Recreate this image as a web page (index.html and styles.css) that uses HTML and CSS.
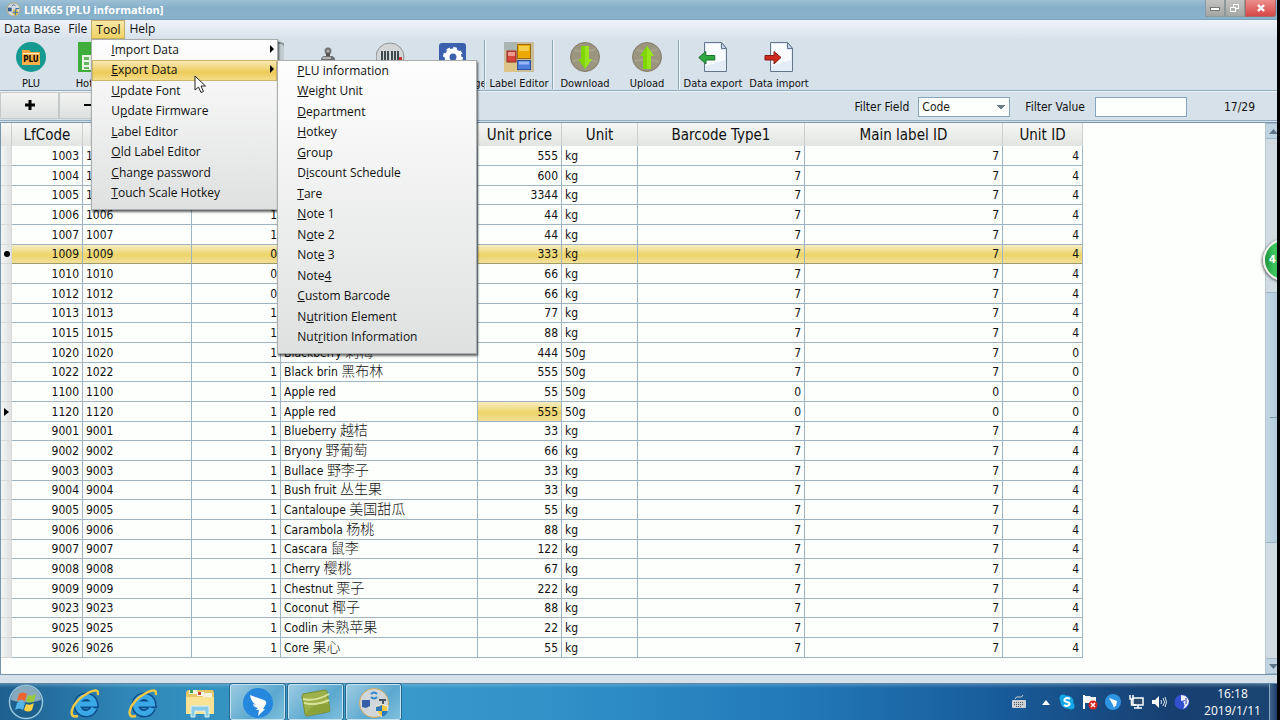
FILE: index.html
```
<!DOCTYPE html>
<html lang="en">
<head>
    <meta charset="UTF-8">
    <meta name="viewport" content="width=device-width, initial-scale=1.0">
    <title>LINK65 [PLU information]</title>
    <link rel="stylesheet" href="styles.css">
</head>
<body>
    <header class="titlebar">
        <svg class="app-icon" viewBox="0 0 16 16">
            <circle cx="8" cy="8" r="7" fill="#d5dbe0" stroke="#b9a57c"/>
            <rect x="2" y="6" width="4" height="4" fill="#33588f"/>
            <path d="M6 4q2-2 4 0M10 7h4M11 7v4" stroke="#3a6da8" fill="none"/>
            <circle cx="10" cy="11" r="3" fill="#e5bd43"/>
            <path d="M10 8v6M7 11h6" stroke="#2f72b8"/>
        </svg>
        <h1 class="title">LINK65 [PLU information]</h1>
        <div class="window-buttons">
            <button class="win-btn" aria-label="Minimize">
                <svg width="12" height="10"><rect x="1.500" y="4.500" width="9" height="3" fill="#fff" stroke="#777"/></svg>
            </button>
            <button class="win-btn" aria-label="Restore">
                <svg width="12" height="10" fill="none" stroke="#fff"><rect x="4.500" y="1.500" width="5" height="4"/><rect x="1.500" y="4.500" width="5" height="4" fill="#aeb0ae"/></svg>
            </button>
            <button class="win-btn close" aria-label="Close">
                <svg width="12" height="10"><path d="M3 2l6 6M9 2L3 8" stroke="#fff" stroke-width="2.400"/></svg>
            </button>
        </div>
    </header>

    <nav class="menubar">
        <button class="menu-btn">Data Base</button>
        <button class="menu-btn">File</button>
        <div class="menu-holder">
            <button class="menu-btn open">Tool</button>
            <ul class="menu">
                <li class="has-sub"><a href="#"><u>I</u>mport Data</a></li>
                <li class="has-sub active"><a href="#"><u>E</u>xport Data</a>
                    <ul class="menu submenu">
                        <li><a href="#"><u>P</u>LU information</a></li>
                        <li><a href="#"><u>W</u>eight Unit</a></li>
                        <li><a href="#"><u>D</u>epartment</a></li>
                        <li><a href="#"><u>H</u>otkey</a></li>
                        <li><a href="#"><u>G</u>roup</a></li>
                        <li><a href="#">D<u>i</u>scount Schedule</a></li>
                        <li><a href="#"><u>T</u>are</a></li>
                        <li><a href="#"><u>N</u>ote 1</a></li>
                        <li><a href="#">N<u>o</u>te 2</a></li>
                        <li><a href="#">Not<u>e</u> 3</a></li>
                        <li><a href="#">Note<u>4</u></a></li>
                        <li><a href="#"><u>C</u>ustom Barcode</a></li>
                        <li><a href="#">N<u>u</u>trition Element</a></li>
                        <li><a href="#">Nut<u>r</u>ition Information</a></li>
                    </ul>
                </li>
                <li><a href="#"><u>U</u>pdate Font</a></li>
                <li><a href="#">U<u>p</u>date Firmware</a></li>
                <li><a href="#"><u>L</u>abel Editor</a></li>
                <li><a href="#"><u>O</u>ld Label Editor</a></li>
                <li><a href="#"><u>C</u>hange password</a></li>
                <li><a href="#"><u>T</u>ouch Scale Hotkey</a></li>
            </ul>
            <svg class="cursor" viewBox="0 0 12 19"><path d="M1 1v14l3.500-3 2.500 5.500 2.500-1-2.500-5.500h4.500z" fill="#fff" stroke="#222"/></svg>
        </div>
        <button class="menu-btn">Help</button>
    </nav>

    <div class="toolbar">
        <button class="tool">
            <svg viewBox="0 0 30 30">
                <circle cx="15" cy="15" r="15" fill="#149a91"/>
                <path d="M6 8h7l2 2h9v13H6z" fill="#f5a53a"/><path d="M7 11h16v2H7z" fill="#fff0cf"/><path d="M6 12h18v11H6z" fill="#f9b04a"/>
                <text x="15" y="20" text-anchor="middle" class="icon-text">PLU</text>
            </svg>
            <span>PLU</span>
        </button>
        <button class="tool">
            <svg viewBox="0 0 30 30">
                <rect width="30" height="30" fill="#3fae3c"/>
                <rect x="4" y="13" width="22" height="15" fill="#e8f5e2"/>
                <path d="M6 15h5v3H6zM6 20h5v3H6zM6 25h5v2H6zM13 15h5v3h-5zM13 20h5v3h-5z" fill="#67b763"/>
            </svg>
            <span>Hotkey</span>
        </button>
        <button class="tool narrow" aria-label="Department"></button>
        <button class="tool narrow" aria-label="Group"></button>
        <button class="tool narrow" aria-label="Note">
            <svg viewBox="0 0 30 30"><rect x="16" y="1" width="15" height="30" rx="5" fill="#c3ccd0" stroke="#879496" stroke-width="2"/></svg>
        </button>
        <button class="tool" aria-label="Tare">
            <svg viewBox="0 0 30 30"><circle cx="14" cy="9" r="2.500" fill="#aaa" stroke="#777" stroke-width="2"/><path d="M12 11h4v3h-4z" fill="#555"/><path d="M7 18q0-4 4-4h6q4 0 4 4v12H7z" fill="#6e7070"/><path d="M9 15h8v2H8z" fill="#b5b7b7"/></svg>
        </button>
        <button class="tool" aria-label="Barcode">
            <svg viewBox="0 0 30 30"><circle cx="14" cy="15" r="14" fill="#d3d7d8" stroke="#8e9496"/><path d="M6 9v14M9 9v14M12 9v14M16 9v14M19 9v14M22 9v14" stroke="#3d4a4e" stroke-width="2"/><rect x="23" y="15" width="3" height="3" fill="#c33"/></svg>
        </button>
        <button class="tool">
            <svg viewBox="0 0 30 30">
                <rect x="1" y="1" width="27" height="27" rx="3" fill="#3c5fae"/>
                <circle cx="15" cy="15" r="6" fill="none" stroke="#fff" stroke-width="5"/>
                <circle cx="15" cy="15" r="8.500" fill="none" stroke="#fff" stroke-width="3" stroke-dasharray="3.500 3.170"/>
            </svg>
            <span>Data manage</span>
        </button>
        <div class="separator"></div>
        <button class="tool wide">
            <svg viewBox="0 0 30 30">
                <rect width="30" height="30" fill="#c8bd98"/><rect width="13" height="8" fill="#aab5b2"/><rect y="19" width="13" height="11" fill="#ddc487"/>
                <rect x="3" y="9" width="9" height="11" fill="#d7443c" stroke="#8d2b27"/><rect x="4" y="10" width="7" height="4" fill="#ee9a8e"/>
                <rect x="13.500" y="2.500" width="13" height="14" fill="#eba900" stroke="#9a6c10"/><rect x="15" y="4" width="10" height="5" fill="#f6cf4a"/>
                <rect x="13.500" y="18.500" width="13" height="9" fill="#4d7ee0" stroke="#30509a"/><rect x="15" y="19.500" width="10" height="3" fill="#96b8f4"/>
            </svg>
            <span>Label Editor</span>
        </button>
        <div class="separator"></div>
        <button class="tool">
            <svg viewBox="0 0 30 30">
                <circle cx="15" cy="15" r="14.500" fill="#9b957f" stroke="#837d6c"/><path d="M4 8q11 3 22-1M3 19q12-4 24 1" stroke="#a8a28d" fill="none" stroke-width="2"/>
                <path d="M11 4h8v13h3l-7 10-7-10h3z" fill="#7ed800"/><path d="M15 4h4v13h3l-7 10z" fill="#98e51c"/>
            </svg>
            <span>Download</span>
        </button>
        <button class="tool">
            <svg viewBox="0 0 30 30">
                <circle cx="15" cy="15" r="14.500" fill="#9b957f" stroke="#837d6c"/><path d="M4 8q11 3 22-1M3 19q12-4 24 1" stroke="#a8a28d" fill="none" stroke-width="2"/>
                <path d="M11 27h8V14h3L15 4 8 14h3z" fill="#7ed800"/><path d="M15 27h4V14h3L15 4z" fill="#98e51c"/>
            </svg>
            <span>Upload</span>
        </button>
        <div class="separator"></div>
        <button class="tool wide">
            <svg viewBox="0 0 30 30">
                <path d="M6.500.500h17l5 6v23h-22z" fill="#e4ecf7" stroke="#65758b"/><path d="M8 2h14v6h5v10L8 24z" fill="#f9fcff"/><path d="M23.500.500v6h5z" fill="#c7d6ea" stroke="#65758b"/>
                <path d="M.800 15.500l7-6v4h9v4.500H8v4z" fill="#2fa842" stroke="#1c702b"/>
            </svg>
            <span>Data export</span>
        </button>
        <button class="tool wide">
            <svg viewBox="0 0 30 30">
                <path d="M6.500.500h17l5 6v23h-22z" fill="#e4ecf7" stroke="#65758b"/><path d="M8 2h14v6h5v10L8 24z" fill="#f9fcff"/><path d="M23.500.500v6h5z" fill="#c7d6ea" stroke="#65758b"/>
                <path d="M17 15.500l-7-6v4H1v4.500h9v4z" fill="#d02a1d" stroke="#831b16"/>
            </svg>
            <span>Data import</span>
        </button>
    </div>

    <div class="filterbar">
        <button class="row-btn" aria-label="Add"><svg width="10" height="10"><path d="M5 0v10M0 5h10" stroke="#000" stroke-width="3"/></svg></button>
        <button class="row-btn" aria-label="Delete"><svg width="10" height="10"><path d="M0 5h10" stroke="#000" stroke-width="2"/></svg></button>
        <div class="filters">
            <label for="filterField">Filter Field</label>
            <select id="filterField">
                <option>Code</option>
                <option>Name</option>
            </select>
            <label for="filterValue">Filter Value</label>
            <input type="text" id="filterValue">
            <span class="count">17/29</span>
        </div>
    </div>

    <main class="grid">
        <div class="grid-body">
            <table>
                <colgroup>
                    <col class="c-mark"><col class="c-lf"><col class="c-code"><col class="c-dept"><col class="c-name">
                    <col class="c-price"><col class="c-unit"><col class="c-barcode"><col class="c-label"><col class="c-unitid">
                </colgroup>
                <thead>
                    <tr><th></th><th>LfCode</th><th></th><th></th><th></th><th>Unit price</th><th>Unit</th><th>Barcode Type1</th><th>Main label ID</th><th>Unit ID</th></tr>
                </thead>
                <tbody>
                    <tr><th></th><td>1003</td><td>1003</td><td>1</td><td></td><td>555</td><td>kg</td><td>7</td><td>7</td><td>4</td></tr>
                    <tr><th></th><td>1004</td><td>1004</td><td>1</td><td></td><td>600</td><td>kg</td><td>7</td><td>7</td><td>4</td></tr>
                    <tr><th></th><td>1005</td><td>1005</td><td>1</td><td></td><td>3344</td><td>kg</td><td>7</td><td>7</td><td>4</td></tr>
                    <tr><th></th><td>1006</td><td>1006</td><td>1</td><td></td><td>44</td><td>kg</td><td>7</td><td>7</td><td>4</td></tr>
                    <tr><th></th><td>1007</td><td>1007</td><td>1</td><td></td><td>44</td><td>kg</td><td>7</td><td>7</td><td>4</td></tr>
                    <tr class="selected"><th><i class="dot"></i></th><td>1009</td><td>1009</td><td>0</td><td></td><td>333</td><td>kg</td><td>7</td><td>7</td><td>4</td></tr>
                    <tr><th></th><td>1010</td><td>1010</td><td>0</td><td></td><td>66</td><td>kg</td><td>7</td><td>7</td><td>4</td></tr>
                    <tr><th></th><td>1012</td><td>1012</td><td>0</td><td></td><td>66</td><td>kg</td><td>7</td><td>7</td><td>4</td></tr>
                    <tr><th></th><td>1013</td><td>1013</td><td>1</td><td></td><td>77</td><td>kg</td><td>7</td><td>7</td><td>4</td></tr>
                    <tr><th></th><td>1015</td><td>1015</td><td>1</td><td></td><td>88</td><td>kg</td><td>7</td><td>7</td><td>4</td></tr>
                    <tr><th></th><td>1020</td><td>1020</td><td>1</td><td>Blackberry <span lang="zh">刺梅</span></td><td>444</td><td>50g</td><td>7</td><td>7</td><td>0</td></tr>
                    <tr><th></th><td>1022</td><td>1022</td><td>1</td><td>Black brin <span lang="zh">黑布林</span></td><td>555</td><td>50g</td><td>7</td><td>7</td><td>0</td></tr>
                    <tr><th></th><td>1100</td><td>1100</td><td>1</td><td>Apple red</td><td>55</td><td>50g</td><td>0</td><td>0</td><td>0</td></tr>
                    <tr><th><i class="arrow"></i></th><td>1120</td><td>1120</td><td>1</td><td>Apple red</td><td class="focused">555</td><td>50g</td><td>0</td><td>0</td><td>0</td></tr>
                    <tr><th></th><td>9001</td><td>9001</td><td>1</td><td>Blueberry <span lang="zh">越桔</span></td><td>33</td><td>kg</td><td>7</td><td>7</td><td>4</td></tr>
                    <tr><th></th><td>9002</td><td>9002</td><td>1</td><td>Bryony <span lang="zh">野葡萄</span></td><td>66</td><td>kg</td><td>7</td><td>7</td><td>4</td></tr>
                    <tr><th></th><td>9003</td><td>9003</td><td>1</td><td>Bullace <span lang="zh">野李子</span></td><td>33</td><td>kg</td><td>7</td><td>7</td><td>4</td></tr>
                    <tr><th></th><td>9004</td><td>9004</td><td>1</td><td>Bush fruit <span lang="zh">丛生果</span></td><td>33</td><td>kg</td><td>7</td><td>7</td><td>4</td></tr>
                    <tr><th></th><td>9005</td><td>9005</td><td>1</td><td>Cantaloupe <span lang="zh">美国甜瓜</span></td><td>55</td><td>kg</td><td>7</td><td>7</td><td>4</td></tr>
                    <tr><th></th><td>9006</td><td>9006</td><td>1</td><td>Carambola <span lang="zh">杨桃</span></td><td>88</td><td>kg</td><td>7</td><td>7</td><td>4</td></tr>
                    <tr><th></th><td>9007</td><td>9007</td><td>1</td><td>Cascara <span lang="zh">鼠李</span></td><td>122</td><td>kg</td><td>7</td><td>7</td><td>4</td></tr>
                    <tr><th></th><td>9008</td><td>9008</td><td>1</td><td>Cherry <span lang="zh">樱桃</span></td><td>67</td><td>kg</td><td>7</td><td>7</td><td>4</td></tr>
                    <tr><th></th><td>9009</td><td>9009</td><td>1</td><td>Chestnut <span lang="zh">栗子</span></td><td>222</td><td>kg</td><td>7</td><td>7</td><td>4</td></tr>
                    <tr><th></th><td>9023</td><td>9023</td><td>1</td><td>Coconut <span lang="zh">椰子</span></td><td>88</td><td>kg</td><td>7</td><td>7</td><td>4</td></tr>
                    <tr><th></th><td>9025</td><td>9025</td><td>1</td><td>Codlin <span lang="zh">未熟苹果</span></td><td>22</td><td>kg</td><td>7</td><td>7</td><td>4</td></tr>
                    <tr><th></th><td>9026</td><td>9026</td><td>1</td><td>Core <span lang="zh">果心</span></td><td>55</td><td>kg</td><td>7</td><td>7</td><td>4</td></tr>
                </tbody>
            </table>
        </div>
        <div class="scrollbar">
            <button class="scroll-btn" aria-label="Scroll up"><svg width="9" height="5"><path d="M0 5l4.500-5L9 5z" fill="#5b7587"/></svg></button>
            <div class="track-top"></div>
            <div class="thumb"></div>
            <div class="track-bottom"></div>
            <button class="scroll-btn" aria-label="Scroll down"><svg width="9" height="5"><path d="M0 0l4.500 5L9 0z" fill="#5b7587"/></svg></button>
            <div class="badge"><div class="badge-disc">4</div></div>
        </div>
    </main>

    <footer class="taskbar">
        <button class="start" aria-label="Start">
            <svg viewBox="0 0 36 36">
                <circle cx="18" cy="18" r="16.500" fill="#1d5f8c" stroke="#98c6dc" stroke-width="1.500"/>
                <path d="M3 16a15 14 0 0 1 30 0q-15 5-30 0z" fill="#86a9bd"/>
                <path d="M11 10q4-3 8 0l-2 7q-4-3-8 0z" fill="#ee6430"/><path d="M20 11q4 2 8-1l-2 7q-4 3-8 0z" fill="#98c93c"/>
                <path d="M9 19q4-3 8 0l-2 7q-4-3-8 0z" fill="#55b5eb"/><path d="M18 20q4 2 8-1l-2 7q-4 3-8 0z" fill="#fed143"/>
            </svg>
        </button>
        <button class="task" aria-label="Internet Explorer">
            <svg viewBox="0 0 30 30">
                <path d="M25 20a8.500 8.500 0 1 1 .500-4H11" fill="none" stroke="#0d4c8c" stroke-width="8"/>
                <path d="M25 20a8.500 8.500 0 1 1 .500-4H11" fill="none" stroke="#3aa9e6" stroke-width="5"/>
                <path d="M29 7q1-8-10-2Q6 12 3 22q-2 8 6 6" fill="none" stroke="#f0c747" stroke-width="2.500"/>
            </svg>
        </button>
        <button class="task" aria-label="Internet Explorer">
            <svg viewBox="0 0 30 30">
                <path d="M25 20a8.500 8.500 0 1 1 .500-4H11" fill="none" stroke="#0d4c8c" stroke-width="8"/>
                <path d="M25 20a8.500 8.500 0 1 1 .500-4H11" fill="none" stroke="#3aa9e6" stroke-width="5"/>
                <path d="M29 7q1-8-10-2Q6 12 3 22q-2 8 6 6" fill="none" stroke="#f0c747" stroke-width="2.500"/>
            </svg>
        </button>
        <button class="task" aria-label="Explorer">
            <svg viewBox="0 0 30 30">
                <path d="M1 4l2-2h25l1 3v20H1z" fill="#e6c765"/><path d="M4 2h8v4H4z" fill="#edf3df"/><path d="M5 2h3v3H5z" fill="#3c9c53"/><path d="M12 4h7v4h-7z" fill="#fff"/><path d="M13 4h3v3h-3z" fill="#c74333"/>
                <path d="M18 5h9v4h-9z" fill="#f8f2df"/><path d="M1 9h28v17H1z" fill="#f8e294"/><path d="M6 29V18h18v11h-4v-6H10v6z" fill="#8bcce8" stroke="#d9f2fb"/>
            </svg>
        </button>
        <button class="task running" aria-label="DingTalk">
            <svg viewBox="0 0 30 30"><circle cx="15" cy="15" r="15" fill="#2687de"/><path d="M7 7l14 5q3 1 2 4l-3 5h2l-7 7 1-6h-3l2-2q-5-1-5-4l3 1q-5-3-6-10z" fill="#fff"/></svg>
        </button>
        <button class="task running" aria-label="Camtasia">
            <svg viewBox="0 0 30 30"><path d="M2 6l22-4q2 0 2 2l3 18q0 2-2 2L6 28q-2 0-2-2L1 8z" fill="#9db04a" stroke="#778f30"/><path d="M2 11q12 3 26-5M3 15q12 3 25-3" stroke="#d9e39a" stroke-width="2" fill="none"/><path d="M4 27Q12 14 28 16l1 7z" fill="#8aa238"/></svg>
        </button>
        <button class="task running" aria-label="LINK65">
            <svg viewBox="0 0 30 30">
                <circle cx="15" cy="15" r="14.500" fill="#d1d6da" stroke="#d4ac5e"/><path d="M3 12h8v6l-4 2-4-1z" fill="#355fa8"/><path d="M12 6q3-3 6 0M12 9q3 3 6 0" stroke="#2e86cc" stroke-width="2" fill="none"/>
                <path d="M20 11h7v2h-2v3h-2v-3h-3z" fill="#46515f"/><path d="M17 18q3 0 6-2 3 2 6 2 0 8-6 11-6-3-6-11z" fill="#f2c83f" stroke="#e8edf1"/><path d="M23 17v6h-6v-4q3 0 6-2zM23 23h6q-1 4-6 6z" fill="#2978c0"/>
            </svg>
        </button>
        <div class="tray">
            <svg class="keyboard" viewBox="0 0 16 16"><rect x="1" y="6" width="14" height="8" rx="1" fill="#ccd1d6"/><path d="M3 8.500h10M3 10.500h10M5 12.500h6" stroke="#555" stroke-dasharray="1 1"/><path d="M4 5q1-3 4-2t4-2" fill="none" stroke="#ccd1d6"/></svg>
            <svg class="chevron" viewBox="0 0 8 5"><path d="M0 5l4-5 4 5z" fill="#fff"/></svg>
            <svg viewBox="0 0 16 16"><circle cx="8" cy="8" r="6.500" fill="#14a7e6"/><circle cx="4" cy="4" r="3.500" fill="#14a7e6"/><circle cx="12" cy="12" r="3.500" fill="#14a7e6"/><path d="M11 5Q8 3 6 5t2 3 2 3-5 0" fill="none" stroke="#fff" stroke-width="2"/></svg>
            <svg viewBox="0 0 16 16"><path d="M2 1v14" stroke="#fff" stroke-width="2"/><path d="M3 2h5l1 1h5v7H9L8 9H3z" fill="#f3f3f3"/><circle cx="11" cy="11" r="4.500" fill="#d5261d"/><path d="M9 9l4 4M13 9l-4 4" stroke="#fff" stroke-width="1.500"/></svg>
            <svg viewBox="0 0 16 16"><circle cx="8" cy="8" r="8" fill="#2f94e2"/><path d="M4 4l8 3-1 5h-1l-1 2-1-3z" fill="#fff"/></svg>
            <svg viewBox="0 0 16 16"><rect x="5" y="4" width="10" height="7" fill="#2a4a6e" stroke="#fff" stroke-width="1.500"/><path d="M10 11v3M6 14h8M2 1v4h3V1M3.500 5v6H8" stroke="#fff" fill="none" stroke-width="1.500"/></svg>
            <svg viewBox="0 0 16 16"><path d="M1 6h3l4-4v12l-4-4H1z" fill="#fff"/><path d="M10 6q1 2 0 4M12 4q3 4 0 8M14 3q3 5 0 10" stroke="#dce6f0" fill="none"/></svg>
            <svg viewBox="0 0 16 16"><circle cx="8" cy="8" r="7.500" fill="#3350cf"/><path d="M7 1q6 0 8 6-1 6-6 8 3-4 0-7l3-2-5 1z" fill="#eef1fb"/><path d="M12 4v6" stroke="#2a3fa8"/></svg>
        </div>
        <div class="clock"><span>16:18</span><span>2019/1/11</span></div>
        <button class="show-desktop" aria-label="Show desktop"></button>
    </footer>
</body>
</html>
```
FILE: styles.css
```
* {
    box-sizing: border-box;
}

body {
    margin: 0;
    height: 100vh;
    display: flex;
    flex-direction: column;
    overflow: hidden;
    border-right: 3px solid #000;
    background: #d6e1e9;
    color: #111;
    font-family: "DejaVu Sans Condensed", "Noto Sans", sans-serif;
    font-size: 12px;
}

button {
    border: 0;
    padding: 0;
    margin: 0;
    background: none;
    color: inherit;
    font: inherit;
}

/* title bar */
.titlebar {
    display: flex;
    align-items: center;
    height: 20px;
    padding-left: 6px;
    background: linear-gradient(#9dc0d6, #86b0ca 40%, #88b3cc);
    border-bottom: 1px solid #7fa3bb;
}

.app-icon {
    width: 15px;
    height: 15px;
}

.title {
    flex: 1;
    margin: 0 0 0 3px;
    font-family: "Open Sans", sans-serif;
    font-size: 11px;
    line-height: 18px;
    font-weight: bold;
    color: #fff;
}

.window-buttons {
    display: flex;
    align-self: flex-start;
    margin-right: 1px;
}

.win-btn {
    display: flex;
    align-items: center;
    justify-content: center;
    width: 20px;
    height: 17px;
    border: 1px solid #8e9799;
    border-top: 0;
    background: linear-gradient(#c3c4c1, #a4a6a4);
}

.win-btn.close {
    width: 31px;
    border-color: #a8696c;
    background: linear-gradient(#ec8f8b, #d64747);
    border-radius: 0 0 3px 0;
}

/* menu bar */
.menubar {
    display: flex;
    height: 18px;
    font-family: "Open Sans", sans-serif;
    background: linear-gradient(#eef3f8, #d9e3ec);
}

.menu-btn {
    display: block;
    height: 18px;
    padding: 0 4px;
    line-height: 18px;
}

.menu-btn.open {
    height: 19px;
    border: 1px solid #c3ae66;
    line-height: 16px;
    background: linear-gradient(#f8e7a8, #efd162);
}

.menu-holder {
    position: relative;
}

.menu {
    position: absolute;
    top: 19px;
    left: 0;
    z-index: 2;
    width: 187px;
    margin: 0;
    padding: 0 0 5px;
    list-style: none;
    border: 1px solid #a9adad;
    background: linear-gradient(#fdfefd, #dfe1e0);
    box-shadow: 1px 2px 2px rgba(0, 0, 0, 0.6);
}

.menu li {
    position: relative;
    height: 20px;
    border: 1px solid transparent;
}

.menu li:nth-child(even) {
    height: 21px;
}

.menu a {
    display: block;
    padding-left: 18px;
    line-height: 18px;
    color: #111;
    text-decoration: none;
}

.menu .active {
    border-color: #cdb66c;
    background: linear-gradient(#f9e9b5, #eccb59 60%, #f4dd89);
}

.has-sub::after {
    content: "";
    position: absolute;
    top: 4px;
    right: 2px;
    border: 4px solid transparent;
    border-left-color: #000;
    border-right: 0;
}

.submenu {
    top: -1px;
    left: 184px;
    width: 200px;
}

.cursor {
    position: absolute;
    top: 55px;
    left: 103px;
    z-index: 3;
    width: 12px;
    height: 19px;
}

/* toolbar */
.toolbar {
    display: flex;
    height: 53px;
    padding-top: 4px;
    border-bottom: 1px solid #8facc1;
    font-size: 11px;
}

.tool {
    display: flex;
    flex-direction: column;
    align-items: center;
    flex: none;
    width: 62px;
    white-space: nowrap;
}

.tool.narrow {
    width: 58px;
}

.tool.wide {
    width: 66px;
}

.tool svg {
    flex: none;
    width: 30px;
    height: 30px;
}

.tool span {
    margin-top: 4px;
    line-height: 15px;
}

.icon-text {
    font-size: 8px;
    font-weight: bold;
}

.separator {
    width: 2px;
    margin: -2px 0 1px;
    border-left: 1px solid #8ba7ba;
    border-right: 1px solid #f2f7fa;
}

/* filter bar */
.filterbar {
    display: flex;
    align-items: center;
    height: 30px;
    border-bottom: 1px solid #8facc1;
    box-shadow: inset 0 1px #eef4f8;
}

.row-btn {
    width: 59px;
    height: 27px;
    border: 1px solid #c4cacb;
    background: linear-gradient(#f3f4f2, #dde0df);
}

.filters {
    display: flex;
    align-items: center;
    margin-left: auto;
    padding-top: 3px;
}

.filters select,
.filters input {
    width: 92px;
    height: 20px;
    border: 1px solid #86a5bc;
    border-radius: 0;
    background-color: #fdfffd;
    color: #222;
    font: inherit;
}

.filters select {
    margin: 0 15px 0 9px;
    padding: 0 3px;
    appearance: none;
    background-image: linear-gradient(to bottom left, #6b7d88 50%, transparent 50%), linear-gradient(to bottom right, #6b7d88 50%, transparent 50%);
    background-repeat: no-repeat;
    background-size: 4px 5px;
    background-position: right 8px center, right 4px center;
}

.filters input {
    margin-left: 10px;
}

.count {
    width: 90px;
    padding-right: 22px;
    text-align: right;
}

/* data grid */
.grid {
    flex: 1;
    display: flex;
    min-height: 0;
    margin: 1px 0 8px;
    border: 1px solid #7895ac;
    border-width: 1px 0 1px 1px;
    background: #fdfffd;
}

.grid-body {
    flex: 1;
    overflow: hidden;
}

table {
    table-layout: fixed;
    width: 1082px;
    border-spacing: 0;
}

.c-mark { width: 11px; }
.c-lf { width: 71px; }
.c-code { width: 109px; }
.c-dept { width: 89px; }
.c-name { width: 197px; }
.c-price { width: 84px; }
.c-unit { width: 76px; }
.c-barcode { width: 167px; }
.c-label { width: 198px; }
.c-unitid { width: 80px; }

thead th {
    height: 23px;
    padding: 0;
    border-right: 1px solid #c9d0d1;
    background: linear-gradient(#f6f7f5, #e1e4e1);
    font-size: 15px;
    font-weight: normal;
    line-height: 22px;
}

tbody th,
td {
    height: 20px;
    padding: 0 3px;
    border-right: 1px solid #9fb4c2;
    border-bottom: 1px solid #9fb4c2;
    line-height: 18px;
    text-align: right;
    white-space: nowrap;
}

tr:nth-child(3n) > td,
tr:nth-child(3n) > th {
    height: 19px;
}

tbody th {
    padding: 0;
    border-color: #d5d9d9;
    background: linear-gradient(to right, #f4f5f4, #dfe2e1);
}

td:nth-child(3),
td:nth-child(5),
td:nth-child(7) {
    text-align: left;
}

td span {
    font-family: "Noto Sans CJK SC", sans-serif;
    font-size: 14px;
    font-weight: 300;
    line-height: 14px;
}

.selected td,
td.focused {
    background: linear-gradient(#f7edc2, #edd468 55%, #f2e09a);
}

.selected td {
    border-bottom-color: #a09c6a;
}

.dot,
.arrow {
    display: block;
    margin-left: 3px;
}

.dot {
    width: 6px;
    height: 6px;
    border-radius: 50%;
    background: #000;
}

.arrow {
    width: 5px;
    border: 4px solid transparent;
    border-left: 5px solid #000;
    border-right: 0;
}

/* scroll bar */
.scrollbar {
    position: relative;
    display: flex;
    flex-direction: column;
    width: 12px;
    border-left: 1px solid #b5c6d1;
    background: #d1dbe2;
}

.scroll-btn {
    display: flex;
    align-items: center;
    height: 16px;
    padding-left: 3px;
    overflow: hidden;
    border: 1px solid #9db8ca;
    border-width: 1px 0;
    background: #bfd3e0;
}

.track-top {
    flex: 154;
}

.thumb {
    flex: 250;
    border: 1px solid #9ab5c7;
    border-width: 1px 0;
    background: linear-gradient(#7f9db1, #7f9db1) no-repeat 4px 50% / 8px 1px, linear-gradient(to right, #c4d6e2, #b1cbdc);
}

.track-bottom {
    flex: 115;
}

/* round counter that hangs over the right edge of the screen */
.badge {
    position: absolute;
    top: 112px;
    right: 0;
    width: 18px;
    height: 50px;
    padding: 4px;
    overflow: hidden;
}

.badge-disc {
    width: 42px;
    height: 42px;
    padding-left: 4px;
    border: 2px solid #eef3ee;
    border-radius: 50%;
    background: linear-gradient(to right, #1f8f3c, #3cc35c 8px);
    box-shadow: -1px 1px 3px #666;
    color: #fff;
    font-size: 11px;
    font-weight: bold;
    line-height: 38px;
}

/* taskbar */
.taskbar {
    display: flex;
    align-items: center;
    height: 37px;
    border-top: 1px solid #5a87a5;
    background: linear-gradient(rgba(255, 255, 255, 0.2), transparent 4px), linear-gradient(to right, #1e5f8e, #2e87b8 10%, #3b9fcb 26%, #2f8fc7 45%, #2279b8 62%, #185c9b 78%, #173f70 92%, #1a4471);
}

.start {
    width: 52px;
    height: 36px;
    margin-right: 4px;
}

.start svg {
    width: 36px;
    height: 36px;
}

.task {
    width: 55px;
    height: 36px;
    margin-right: 3px;
}

.task svg {
    display: block;
    width: 30px;
    height: 30px;
    margin: 2px auto 0;
}

.task.running {
    border: 1px solid #c4e3f2;
    outline: 1px solid #25678f;
    border-radius: 2px;
    background: linear-gradient(135deg, #9ccbe2, #5ba8cf 60%, #7fc0dd);
}

.tray {
    display: flex;
    align-items: center;
    gap: 7px;
    margin: 0 6px 0 auto;
}

.tray svg {
    width: 16px;
    height: 16px;
}

.tray .chevron {
    width: 8px;
    height: 5px;
    margin: 0 2px 0 8px;
}

.clock {
    display: flex;
    flex-direction: column;
    align-items: center;
    width: 73px;
    color: #fff;
    line-height: 17px;
    font-family: "Open Sans", sans-serif;
}

.show-desktop {
    width: 8px;
    height: 36px;
    border-left: 1px solid #8aa6c0;
    background: linear-gradient(to right, #41648a, #1a3f6b);
}
```
